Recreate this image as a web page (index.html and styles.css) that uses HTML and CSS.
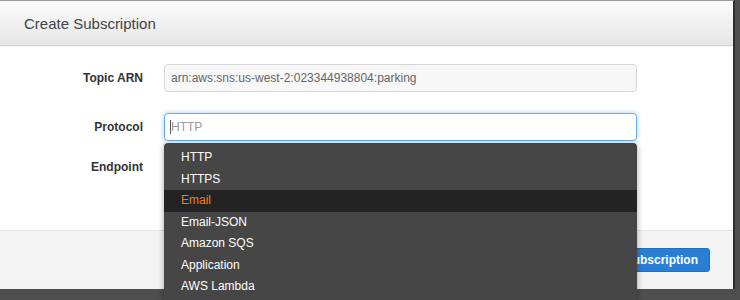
FILE: index.html
```html
<!DOCTYPE html>
<html lang="en">
<head>
    <meta charset="UTF-8">
    <meta name="viewport" content="width=device-width, initial-scale=1.0">
    <title>Create Subscription</title>
    <link rel="stylesheet" href="styles.css">
</head>
<body>

<div class="modal">
    <div class="modal-header">
        <h3>Create Subscription</h3>
    </div>

    <div class="modal-body">
        <label class="field-label">Topic ARN</label>
        <input class="field readonly" type="text" value="arn:aws:sns:us-west-2:023344938804:parking" readonly>

        <label class="field-label">Protocol</label>
        <div class="combo">
            <input class="field focused" type="text" placeholder="HTTP">
            <span class="caret"></span>
            <ul class="menu">
                <li>HTTP</li>
                <li>HTTPS</li>
                <li class="active">Email</li>
                <li>Email-JSON</li>
                <li>Amazon SQS</li>
                <li>Application</li>
                <li>AWS Lambda</li>
            </ul>
        </div>

        <label class="field-label">Endpoint</label>
        <input class="field" type="text">
    </div>

    <div class="modal-footer">
        <button class="primary">Create Subscription</button>
    </div>
</div>

</body>
</html>
```

FILE: styles.css
```css
body {
    margin: 0;
    height: 300px;
    overflow: hidden;
    background: #4e4e4e;
    font-family: "Liberation Sans", Arial, sans-serif;
    color: #333;
}
.modal {
    width: 735px;
    height: 289px;
    box-sizing: border-box;
    background: #fff;
    border-top: 1px solid #9a9a9a;
    border-right: 2px solid #2e2e2e;
    display: flex;
    flex-direction: column;
}
.modal-header {
    height: 45px;
    box-sizing: border-box;
    padding: 0 24px;
    display: flex;
    align-items: center;
    background: linear-gradient(#fbfbfb, #e6e6e6);
    border-bottom: 1px solid #d4d4d4;
    box-shadow: 0 1px 0 #f2f2f2;
}
.modal-header h3 {
    margin: 0;
    font-size: 15px;
    font-weight: normal;
    color: #444;
}
.modal-body {
    flex: 1;
    padding-top: 18px;
    display: grid;
    grid-template-columns: 143px 473px;
    grid-template-rows: 49px 40px 28px;
    column-gap: 21px;
    align-items: start;
}
.field-label {
    font-size: 12px;
    font-weight: bold;
    line-height: 28px;
    text-align: right;
}
.field {
    width: 100%;
    height: 28px;
    box-sizing: border-box;
    margin: 0;
    padding: 0 6px;
    font-family: inherit;
    font-size: 12px;
    color: #555;
    border: 1px solid #ccc;
    border-radius: 4px;
    outline: none;
}
.field.readonly {
    background: #f7f7f7;
    color: #666;
    border-color: #d6d6d6;
}
.field.focused {
    border-color: #66afe9;
    box-shadow: 0 0 5px rgba(102, 175, 233, 0.6);
}
.field::placeholder { color: #999; }
.combo { position: relative; }
.caret {
    position: absolute;
    left: 6px;
    top: 7px;
    width: 1px;
    height: 14px;
    background: #555;
}
.menu {
    position: absolute;
    top: 30px;
    left: 0;
    right: 0;
    z-index: 2;
    margin: 0;
    padding: 4px 0 0;
    height: 157px;
    box-sizing: border-box;
    overflow: hidden;
    list-style: none;
    background: #464646;
    border-radius: 4px 4px 0 0;
    box-shadow: 0 2px 6px rgba(0, 0, 0, 0.35);
}
.menu li {
    height: 21.5px;
    line-height: 21.5px;
    padding-left: 17px;
    font-size: 12px;
    color: #fff;
}
.menu li.active {
    background: #232323;
    color: #e8811e;
}
.modal-footer {
    height: 59px;
    box-sizing: border-box;
    padding-right: 23px;
    display: flex;
    align-items: center;
    justify-content: flex-end;
    background: #f3f3f3;
    border-top: 1px solid #e2e2e2;
}
button {
    height: 24px;
    padding: 0 11px;
    font-family: inherit;
    font-size: 12px;
    font-weight: bold;
    border: none;
    border-radius: 3px;
    cursor: pointer;
}
.primary {
    background: #2a7fd5;
    color: #fff;
    border: 1px solid #2270c0;
}
```
